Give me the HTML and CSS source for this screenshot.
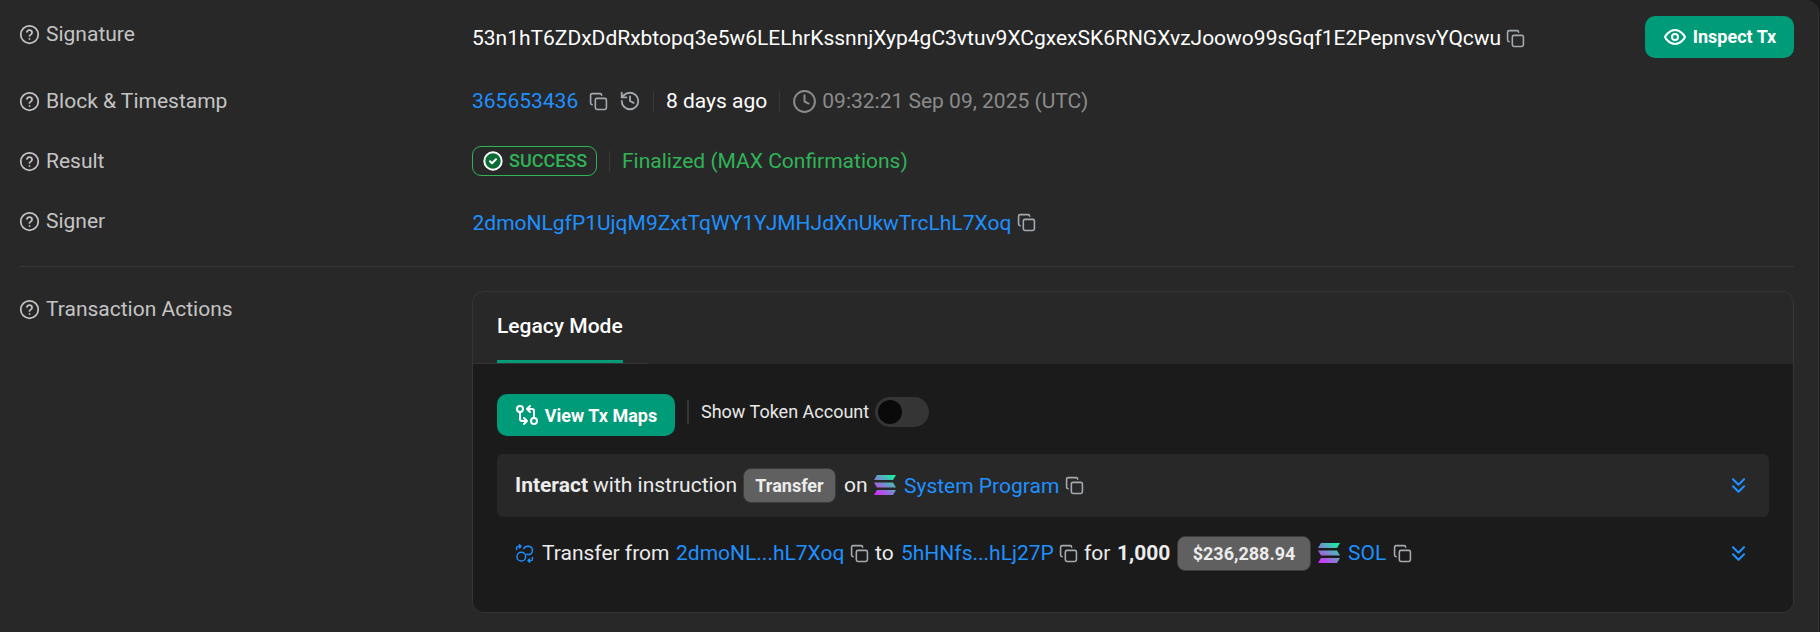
FILE: index.html
```html
<!DOCTYPE html>
<html lang="en">
<head>
<meta charset="utf-8">
<title>Transaction Details</title>
<link rel="stylesheet" href="styles.css">
</head>
<body>
<svg class="defs" width="0" height="0" aria-hidden="true">
  <defs>
    <linearGradient id="sol" gradientUnits="userSpaceOnUse" x1="20" y1="0" x2="4" y2="20">
      <stop offset="0" stop-color="#14f0a0"/><stop offset="1" stop-color="#d82cfb"/>
    </linearGradient>
    <symbol id="help" viewBox="0 0 24 24"><circle cx="12" cy="12" r="10"/><path d="M9.1 9a3 3 0 0 1 5.8 1c0 2-2.9 2.6-2.9 3.6M12 17h.01"/></symbol>
    <symbol id="copy" viewBox="0 0 24 24"><rect x="8" y="8" width="14" height="14" rx="2"/><path d="M4 16c-1.1 0-2-.9-2-2V4c0-1.1.9-2 2-2h10c1.1 0 2 .9 2 2"/></symbol>
    <symbol id="history" viewBox="0 0 24 24"><path d="M3 12a9 9 0 1 0 9-9 9.75 9.75 0 0 0-6.74 2.74L3 8"/><path d="M3 3v5h5M12 7v5l4 2"/></symbol>
    <symbol id="clock" viewBox="0 0 24 24"><circle cx="12" cy="12" r="10"/><path d="M12 6v6l4 2"/></symbol>
    <symbol id="eye" viewBox="0 0 24 24"><path d="M2 12s3.5-7 10-7 10 7 10 7-3.500 7-10 7S2 12 2 12Z"/><circle cx="12" cy="12" r="3"/></symbol>
    <symbol id="compare" viewBox="0 0 24 24"><circle cx="5" cy="6" r="3"/><path d="M12 6h5a2 2 0 0 1 2 2v7M15 9l-3-3 3-3"/><circle cx="19" cy="18" r="3"/><path d="M12 18H7a2 2 0 0 1-2-2V9M9 15l3 3-3 3"/></symbol>
    <symbol id="chevrons" viewBox="0 0 24 24"><path d="m5 4 7 7 7-7M5 13l7 7 7-7"/></symbol>
    <symbol id="swap" viewBox="0 0 24 24"><circle cx="8" cy="16" r="5.500"/><path d="M11 6c2-5 11-4 11 2 0 4-3 6-7 5M2 7V5c0-1 1-2 2-2h3M5.500 1l2 2-2 2M22 17v2c0 1-1 2-2 2h-3M18.500 19l-2 2 2 2"/></symbol>
    <symbol id="solana" viewBox="0 0 24 20"><path fill="url(#sol)" d="M4 0h19l-3 5H1zM1 7.500h19l3 5H4zM4 15h19l-3 5H1z"/></symbol>
  </defs>
</svg>
<main class="panel">
  <section class="row row-signature">
    <div class="label"><svg class="i-help"><use href="#help"/></svg>Signature</div>
    <div class="value"><span class="hash">53n1hT6ZDxDdRxbtopq3e5w6LELhrKssnnjXyp4gC3vtuv9XCgxexSK6RNGXvzJoowo99sGqf1E2PepnvsvYQcwu</span><svg class="i-copy"><use href="#copy"/></svg></div>
    <button class="btn"><svg class="i-eye"><use href="#eye"/></svg><span class="btn-text">Inspect Tx</span></button>
  </section>
  <section class="row row-block">
    <div class="label"><svg class="i-help"><use href="#help"/></svg>Block &amp; Timestamp</div>
    <div class="value"><a class="link block">365653436</a><svg class="i-copy"><use href="#copy"/></svg><svg class="i-history"><use href="#history"/></svg><i class="sep"></i><span class="ago">8 days ago</span><i class="sep"></i><svg class="i-clock"><use href="#clock"/></svg><span class="time">09:32:21 Sep 09, 2025 (UTC)</span></div>
  </section>
  <section class="row row-result">
    <div class="label"><svg class="i-help"><use href="#help"/></svg>Result</div>
    <div class="value"><span class="success"><svg class="i-check" viewBox="0 0 20 20"><circle cx="10" cy="10" r="8.700"/><path d="m7 10.200 2 2 4-4"/></svg><span class="success-text">SUCCESS</span></span><i class="sep"></i><span class="final">Finalized (MAX Confirmations)</span></div>
  </section>
  <section class="row row-signer">
    <div class="label"><svg class="i-help"><use href="#help"/></svg>Signer</div>
    <div class="value"><a class="link signer">2dmoNLgfP1UjqM9ZxtTqWY1YJMHJdXnUkwTrcLhL7Xoq</a><svg class="i-copy"><use href="#copy"/></svg></div>
  </section>
  <hr class="rule">
  <section class="row row-actions">
    <div class="label"><svg class="i-help"><use href="#help"/></svg>Transaction Actions</div>
    <div class="card">
      <div class="tabs"><div class="tab">Legacy Mode</div></div>
      <div class="body">
        <div class="tools">
          <button class="btn maps"><svg class="i-compare"><use href="#compare"/></svg><span class="btn-text">View Tx Maps</span></button>
          <i class="bar"></i><span class="show">Show Token Account</span><span class="toggle"></span>
        </div>
        <div class="line line-main">
          <b class="interact">Interact</b><span class="with">with instruction</span><span class="badge">Transfer</span><span class="on">on</span><svg class="i-sol"><use href="#solana"/></svg><a class="link program">System Program</a><svg class="i-copy"><use href="#copy"/></svg><svg class="i-chev"><use href="#chevrons"/></svg>
        </div>
        <div class="line line-sub">
          <svg class="i-swap"><use href="#swap"/></svg><span class="from">Transfer from</span><a class="link addr-a">2dmoNL...hL7Xoq</a><svg class="i-copy"><use href="#copy"/></svg><span class="to">to</span><a class="link addr-b">5hHNfs...hLj27P</a><svg class="i-copy"><use href="#copy"/></svg><span class="for">for</span><b class="amount">1,000</b><span class="badge usd">$236,288.94</span><svg class="i-sol"><use href="#solana"/></svg><a class="link sol">SOL</a><svg class="i-copy"><use href="#copy"/></svg><svg class="i-chev"><use href="#chevrons"/></svg>
        </div>
      </div>
    </div>
  </section>
</main>
</body>
</html>
```
FILE: styles.css
```css
* { box-sizing: border-box; }
body { margin: 0; background: #1b1b1b; font-family: Roboto, "Liberation Sans", sans-serif; font-size: 21px; color: #f0f0f0; overflow: hidden; }
.defs { display: block; height: 0; }
svg { flex: none; fill: none; stroke: currentColor; stroke-width: 2; stroke-linecap: round; stroke-linejoin: round; }
.panel { width: 1819px; height: 632px; padding: 0 24px 0 19px; background: #282828; border-right: 1px solid #353535; border-top-right-radius: 14px; }
.row { display: flex; align-items: center; white-space: nowrap; }
.row-signature { height: 68px; padding-top: 6px; }
.row-block { height: 66px; }
.row-result { height: 54px; }
.row-signer { height: 66px; }
.row-signature .label { padding-bottom: 6px; }
.row-signature .value { padding-top: 2px; }
.row-signer .value { padding-top: 3px; }
.label { width: 453px; flex: none; display: flex; align-items: center; gap: 6px; color: #c4c4c4; }
.value { display: flex; align-items: center; flex: 1; }
.i-help { width: 21px; height: 21px; }
.i-copy { width: 19px; height: 19px; margin-right: 1px; color: #a5a9b0; stroke-width: 2; }
.i-history { width: 22px; height: 22px; color: #a5a9b0; margin-left: 10px; }
.i-clock { width: 25px; height: 25px; color: #8b8b8b; stroke-width: 1.900; }
.i-eye { width: 24px; height: 24px; }
.hash, .ago { color: #fff; }
.hash { width: 1034px; letter-spacing: -0.006px; }
.link { color: #1e90ff; }
.block { width: 117px; }
.sep { width: 1px; height: 21px; background: #393939; margin: 0 12px; }
.time { color: #8b8b8b; margin-left: 5px; }
.btn { height: 42px; border: 0; border-radius: 10px; background: #009b79; color: #fff; font: 700 18px Roboto, sans-serif; display: flex; align-items: center; justify-content: center; gap: 6px; padding: 0; }
.row-signature .btn { width: 149px; }
.row-signature .btn-text { padding-bottom: 2px; }
.success { width: 125px; height: 30px; border: 1px solid #2fb457; border-radius: 9px; color: #2fb457; font-size: 18px; font-weight: 500; display: flex; align-items: center; gap: 6px; padding-left: 10px; }
.success-text { padding-bottom: 1px; }
.i-check { width: 20px; height: 20px; fill: #0b6b35; stroke: #fff; }
.i-check path { fill: none; }
.final { color: #2fb457; }
.signer { width: 545px; padding-left: 0.500px; }
.rule { height: 1px; border: 0; margin: 12px 0 24px; background: #353535; }
.row-actions { align-items: flex-start; }
.row-actions .label { height: 36px; }
.card { flex: 1; height: 322px; border: 1px solid #353535; border-radius: 12px; overflow: hidden; }
.tabs { height: 72px; padding: 0 24px; width: 174px; border-bottom: 1px solid #353535; }
.tab { height: 71px; border-bottom: 3px solid #009b79; font-weight: 500; color: #fff; display: flex; align-items: center; }
.body { height: 249px; background: #1b1b1b; padding: 30px 24px 0; }
.tools { height: 42px; display: flex; align-items: center; margin-bottom: 18px; }
.maps { width: 178px; }
.i-compare { width: 24px; height: 24px; }
.bar { width: 2px; height: 24px; background: #353535; margin: 0 12px 6px; }
.show { font-size: 18px; margin-bottom: 7px; width: 174px; color: #e8e8e8; }
.toggle { width: 54px; height: 30px; border-radius: 15px; background: #353535; margin-bottom: 6px; padding: 3px; }
.toggle::before { content: ""; display: block; width: 24px; height: 24px; border-radius: 50%; background: #0a0a0a; }
.line { height: 63px; display: flex; align-items: center; padding: 0 24px 0 18px; color: #ececec; }
.line-main { background: #282828; border-radius: 6px; padding-bottom: 1px; }
.line-sub { margin-top: 4px; height: 64px; }
.badge { height: 35px; border: 1px solid #3c3c3c; border-radius: 8px; background: #606060; font-size: 18px; font-weight: 700; display: flex; align-items: center; justify-content: center; width: 93px; }
.interact { width: 78px; }
.with { width: 150px; }
.on { margin-left: 8px; width: 29px; }
.i-sol { width: 24px; height: 20px; stroke: none; }
.program { margin-left: 7px; width: 161px; padding-top: 2px; }
.line-main .i-copy { margin-top: 1px; }
.i-chev { width: 19px; height: 19px; margin-left: auto; color: #1e90ff; stroke-width: 2.600; margin-right: -3px; }
.i-swap { width: 19px; height: 19px; color: #1e90ff; stroke-width: 1.800; }
.from { margin-left: 8px; width: 134px; }
.addr-a { width: 174px; }
.to { margin-left: 5px; width: 26px; }
.addr-b { width: 158px; }
.for { margin-left: 5px; width: 33px; }
.amount { width: 60px; }
.usd { width: 134px; margin-right: 6px; }
.sol { margin-left: 7px; width: 45px; }
```
